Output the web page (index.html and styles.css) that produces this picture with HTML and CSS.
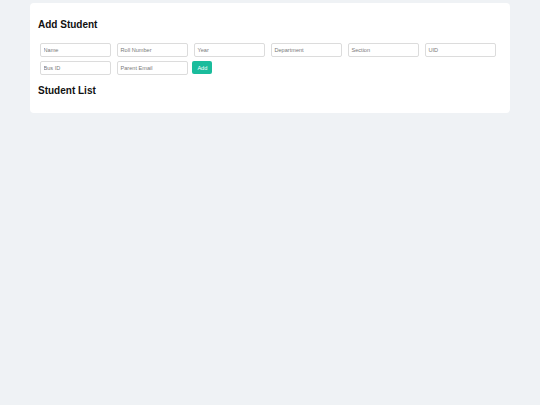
FILE: index.html
```html
<!DOCTYPE html>
<html lang="en">
<head>
<meta charset="utf-8">
<title>Students</title>
<link rel="stylesheet" href="styles.css">
</head>
<body>
<div class="card">
  <h2 class="title">Add Student</h2>
  <form class="form">
    <input class="field" type="text" placeholder="Name">
    <input class="field" type="text" placeholder="Roll Number">
    <input class="field" type="text" placeholder="Year">
    <input class="field" type="text" placeholder="Department">
    <input class="field" type="text" placeholder="Section">
    <input class="field" type="text" placeholder="UID">
    <input class="field" type="text" placeholder="Bus ID">
    <input class="field" type="text" placeholder="Parent Email">
    <button class="btn" type="button">Add</button>
  </form>
  <h2 class="title list-title">Student List</h2>
</div>
</body>
</html>
```
FILE: styles.css
```css
html, body {
  margin: 0;
  padding: 0;
}
body {
  background: #eff2f5;
  font-family: "Liberation Sans", Arial, sans-serif;
  width: 540px;
  height: 405px;
  padding-top: 3px;
  box-sizing: border-box;
}
.card {
  margin-left: 30px;
  width: 480px;
  box-sizing: border-box;
  background: #ffffff;
  border-radius: 4px;
  padding: 16px 8px 15.5px 8px;
}
.title {
  margin: 0;
  font-size: 10px;
  line-height: 12px;
  font-weight: bold;
  color: #111111;
}
.form {
  display: flex;
  flex-wrap: wrap;
  column-gap: 6.3px;
  row-gap: 4.5px;
  margin: 11.5px 0 0 0;
  padding-left: 2px;
  align-items: flex-start;
}
.field {
  width: 70.7px;
  height: 14px;
  box-sizing: border-box;
  margin: 0;
  border: 1px solid #dcdcdc;
  border-radius: 2px;
  padding: 0 0 0 2.5px;
  font-family: "Liberation Sans", Arial, sans-serif;
  font-size: 5.6px;
  color: #333;
  background: #fff;
  outline: none;
}
.field::placeholder {
  color: #7a7a7a;
}
.btn {
  margin: 0 0 0 -1.6px;
  width: 20px;
  height: 13.3px;
  box-sizing: border-box;
  border: none;
  border-radius: 2px;
  background: #1abc9c;
  color: #ffffff;
  font-family: "Liberation Sans", Arial, sans-serif;
  font-size: 5.6px;
  padding: 0;
}
.list-title {
  margin-top: 10.2px;
}
```
